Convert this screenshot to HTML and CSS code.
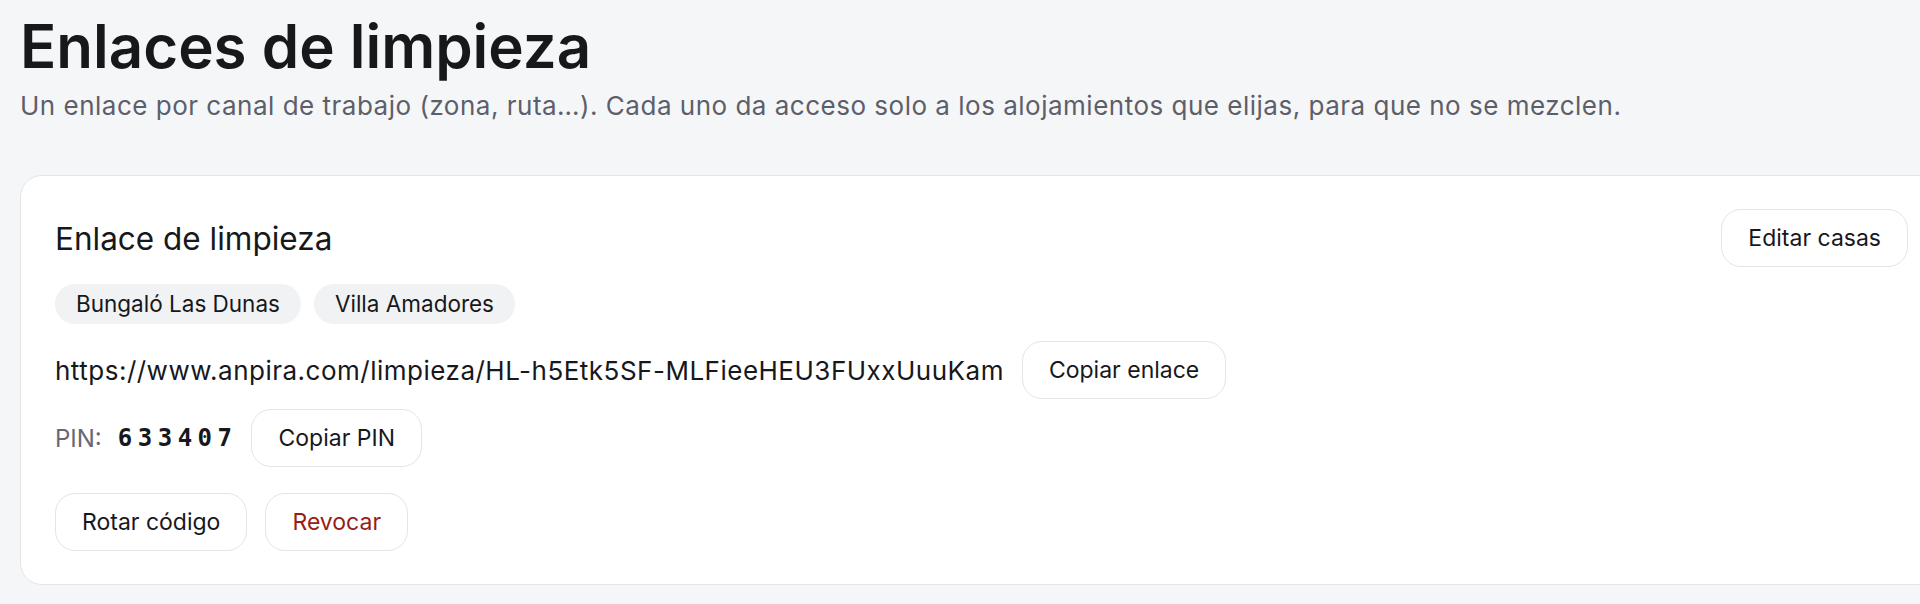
FILE: index.html
```html
<!DOCTYPE html>
<html lang="es">

<head>
  <meta charset="UTF-8">
  <meta name="viewport" content="width=device-width, initial-scale=1.0">
  <title>Enlaces de limpieza</title>
  <link rel="stylesheet" href="styles.css">
</head>

<body>
  <div class="page">
    <h1 class="page-title">Enlaces de limpieza</h1>
    <p class="page-subtitle">Un enlace por canal de trabajo (zona, ruta…). Cada uno da acceso solo a los alojamientos que elijas, para que no se mezclen.</p>

    <div class="card">
      <div class="card-head">
        <h2 class="card-title">Enlace de limpieza</h2>
        <button class="btn">Editar casas</button>
      </div>
      <div class="chips">
        <span class="chip">Bungaló Las Dunas</span>
        <span class="chip">Villa Amadores</span>
      </div>
      <div class="row link-row">
        <span class="link">https://www.anpira.com/limpieza/HL-h5Etk5SF-MLFieeHEU3FUxxUuuKam</span>
        <button class="btn">Copiar enlace</button>
      </div>
      <div class="row pin-row">
        <span class="pin-label">PIN:</span>
        <span class="pin-code">633407</span>
        <button class="btn">Copiar PIN</button>
      </div>
      <div class="row actions">
        <button class="btn">Rotar código</button>
        <button class="btn danger">Revocar</button>
      </div>
    </div>
  </div>
</body>

</html>
```

FILE: styles.css
```css
html {
  overflow-x: hidden;
}

body {
  margin: 0;
  padding: 0;
  background-color: #f5f6f8;
  color: #17181c;
  font-family: Inter, "Noto Sans", sans-serif;
}

.page {
  padding: 10px 20px 0;
}

.page-title {
  margin: 0;
  font-size: 60px;
  line-height: 72px;
  font-weight: 600;
}

.page-subtitle {
  margin: 6px 0 0;
  font-size: 26px;
  line-height: 36px;
  letter-spacing: 0.5px;
  color: #5c5f6b;
}

.card {
  margin: 51px -43px 0 0;
  padding: 33px 34px;
  background-color: #fff;
  border: 1px solid #e5e6ea;
  border-radius: 22px;
}

.card-head {
  display: flex;
  align-items: center;
  justify-content: space-between;
}

.card-title {
  margin: 0;
  font-size: 31.5px;
  font-weight: 400;
}

.chips {
  display: flex;
  gap: 13px;
  margin-top: 17px;
}

.chip {
  height: 40px;
  line-height: 40px;
  padding: 0 21px;
  border-radius: 999px;
  background-color: #f1f2f4;
  font-size: 22.5px;
}

.row {
  display: flex;
  align-items: center;
  gap: 18px;
}

.link-row {
  margin-top: 17px;
}

.link {
  font-size: 26px;
  letter-spacing: 0.5px;
}

.pin-row {
  margin-top: 10px;
}

.pin-label {
  font-size: 24px;
  color: #666873;
}

.pin-code {
  margin-left: -20px;
  margin-right: -4px;
  padding-left: 18px;
  font-family: "DejaVu Sans Mono", monospace;
  font-weight: 600;
  font-size: 24px;
  letter-spacing: 5.5px;
}

.actions {
  margin-top: 26px;
}

.btn {
  box-sizing: border-box;
  height: 58px;
  padding: 0 26px;
  background-color: #fff;
  border: 1.5px solid #e3e4e8;
  border-radius: 20px;
  color: #17181c;
  font-family: Inter, "Noto Sans", sans-serif;
  font-size: 23px;
  cursor: pointer;
}

.danger {
  color: #9a1c14;
}
```
